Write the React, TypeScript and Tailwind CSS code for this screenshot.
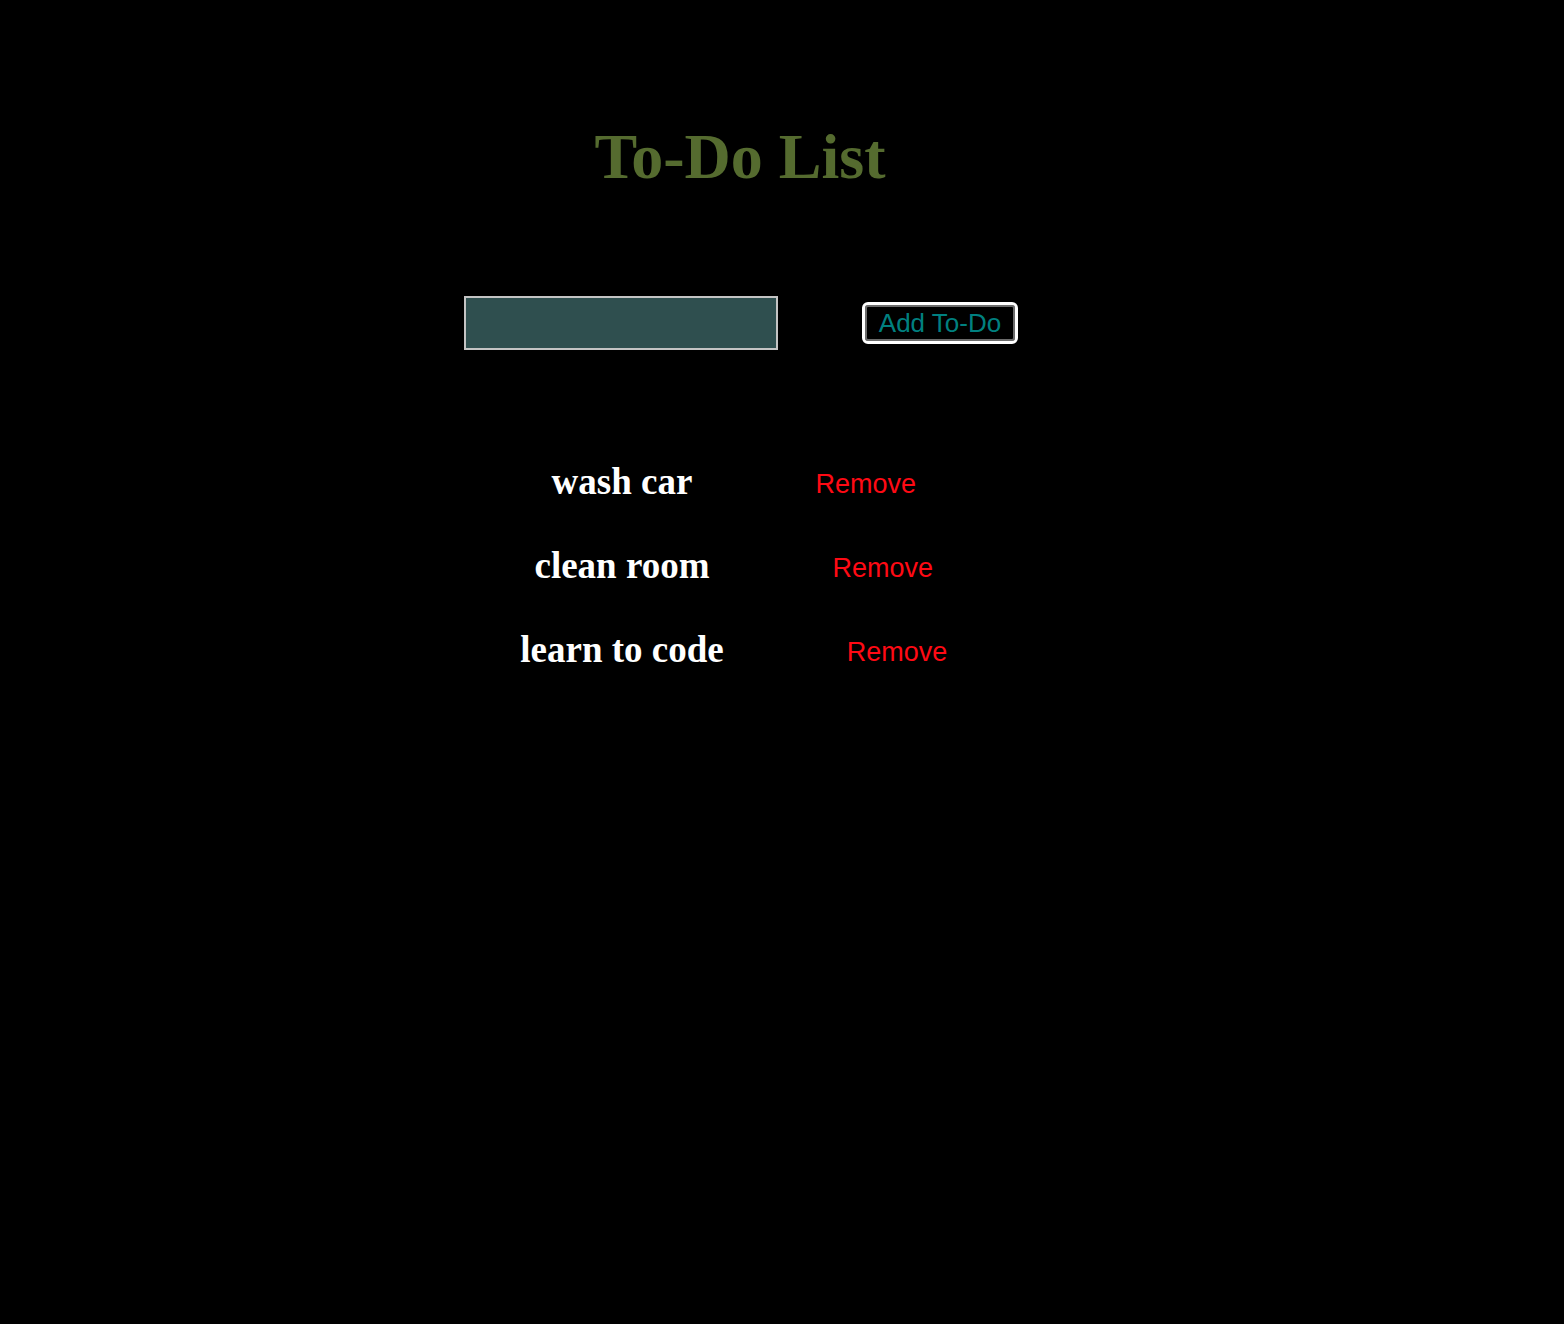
const todos = ['wash car', 'clean room', 'learn to code'];

const App = () => {
  return (
    <div className="min-h-screen w-full bg-black">
      <div className="flex flex-col items-center pr-[84px]">
        {/* Title */}
        <h1 className="pt-[125px] text-[64px] leading-none font-bold text-[#556b2f] font-['Liberation_Serif',serif]">
          To-Do List
        </h1>

        {/* Input row */}
        <div className="mt-[107px] ml-[2px] flex items-center gap-[84px]">
          <input
            type="text"
            className="w-[314px] h-[54px] bg-[#2f4f4f] border-2 border-[#c4c4c4] outline-none text-white px-2"
          />
          <button className="h-[42px] px-[14px] bg-black border-[3px] border-white rounded-[6px] shadow-[inset_0_0_0_2px_#6b6b6b] text-[26px] leading-none text-[#008080] font-['Liberation_Sans',Arial,sans-serif]">
            Add To-Do
          </button>
        </div>

        {/* List */}
        <ul className="mt-[90px] self-stretch flex flex-col items-center pr-[236px]">
          {todos.map((todo) => (
            <li key={todo} className="flex items-center justify-center h-[84px]">
              <h2 className="text-[37px] leading-[84px] font-bold text-white font-['Liberation_Serif',serif] whitespace-nowrap">
                {todo}
              </h2>
              <span className="w-0 flex items-center">
                <button className="ml-[123px] mt-[4px] whitespace-nowrap text-[27px] leading-none text-[#ff0a14] font-['Liberation_Sans',Arial,sans-serif]">
                  Remove
                </button>
              </span>
            </li>
          ))}
        </ul>
      </div>
    </div>
  );
};

export default App;
